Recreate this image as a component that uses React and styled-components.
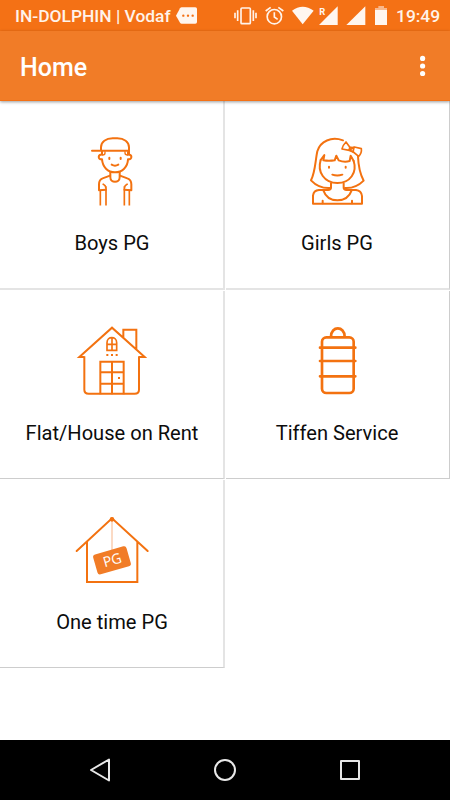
import React from 'react'
import styled, { createGlobalStyle } from 'styled-components'

const GlobalStyle = createGlobalStyle`
  * {
    box-sizing: border-box;
  }
  body {
    margin: 0;
    background: #fff;
    font-family: Roboto, sans-serif;
  }
`
const Screen = styled.div`
  display: flex;
  flex-direction: column;
  width: 450px;
  height: 800px;
  background: #fff;
  overflow: hidden;
`
const StatusBar = styled.div`
  display: flex;
  align-items: center;
  flex: none;
  height: 31px;
  padding: 0 10px 0 15px;
  background: #f47115;
  color: #fff3ea;
`
const Carrier = styled.span`
  width: 161px;
  font-size: 17.4px;
  font-weight: 500;
  line-height: 31px;
  padding-top: 1px;
  white-space: nowrap;
`
const StatusIcons = styled.div`
  display: flex;
  align-items: center;
  gap: 8px;
  margin-left: auto;
`
const Time = styled.span`
  width: 44px;
  margin-left: 1px;
  padding-top: 1px;
  font-size: 17.4px;
  font-weight: 500;
  line-height: 31px;
  white-space: nowrap;
`
const Icon = styled.svg`
  display: block;
  flex: none;
  width: ${(props) => props.$w}px;
  height: ${(props) => props.$h}px;
  margin-left: ${(props) => props.$shift || 0}px;
`
const AppBar = styled.header`
  display: flex;
  align-items: center;
  justify-content: space-between;
  flex: none;
  height: 70px;
  padding: 0 24px 0 20px;
  background: #f17c27;
  border-bottom: 1px solid #f47115;
  box-shadow: 0 1px 3px rgba(0, 0, 0, 0.4);
  z-index: 1;
`
const Title = styled.h1`
  margin: 0;
  padding-top: 5px;
  font-size: 25px;
  font-weight: 500;
  line-height: 30px;
  color: #fff;
`
const Grid = styled.main`
  display: grid;
  grid-template-columns: 225px 225px;
  grid-auto-rows: 189px;
  align-content: start;
  flex: 1;
`
const Cell = styled.div`
  display: flex;
  flex-direction: column;
  align-items: center;
  margin-top: 1px;
  padding: 23px 0 0 1px;
  border-right: 2px solid #e4e4e4;
  border-bottom: 1px solid #cdcdcd;

  &:nth-child(even) {
    margin-left: 1px;
    padding: 23px 1px 0 0;
    border-right: 1px solid #cdcdcd;
  }
  &:nth-child(-n + 2) {
    margin-top: 0;
    border-bottom: 2px solid #e4e4e4;
  }
`
const Label = styled.span`
  margin-top: 17px;
  font-size: 20.1px;
  line-height: 24px;
  color: #0c0c0c;
  white-space: nowrap;
`
const Drawing = styled.svg`
  display: block;
  flex: none;
  width: 90px;
  height: 90px;
  fill: none;
  stroke: #f37210;
  stroke-width: ${(props) => props.$line || 6};
  stroke-linecap: round;
  stroke-linejoin: round;
`
const NavBar = styled.nav`
  display: flex;
  align-items: center;
  justify-content: space-between;
  flex: none;
  height: 60px;
  padding: 0 88px;
  background: #000;
`

const BoyIcon = () => (
  <Drawing viewBox="-9 -3 270 270">
    <path d="M66 77H177M93 75V67C93 50 108 40 128 40H142C162 40 177 50 177 67V86" />
    <path d="M96 79V89C84 87 82 104 96 103C98 126 113 142 135 142C157 142 173 126 174 103C188 104 187 87 174 89V81" />
    <path d="M105 80V84Q105 90 98 90M165 80V84Q165 90 173 90" strokeWidth="4" />
    <path d="M118 98V102M152 98V102M125 119Q135 125 145 119" />
    <path d="M121 142V157C121 175 149 175 149 157V142" />
    <path d="M120 152L98 160Q87 164 87 178V196L108 194M150 152L172 160Q184 164 184 178V196L163 194" />
    <path d="M91 198V239M178 198V239M108 186V239M163 186V239M100 178Q107 181 108 190M171 178Q164 181 163 190" strokeLinecap="square" strokeWidth="5" />
  </Drawing>
)

const GirlIcon = () => (
  <Drawing viewBox="-9 -3 270 270">
    <path d="M144 46C109 34 76 48 67 79C61 106 61 142 48 166Q72 191 105 189M189 94C190 122 194 145 206 167Q182 191 150 189" />
    <path d="M77 105C66 141 88 174 127 174C166 174 187 142 176 108" />
    <path d="M77 105L88 90L85 106Q102 109 119 106L124 92L131 106Q148 113 164 108L167 92L176 108" />
    <path d="M153 51Q143 61 141 72L163 76L178 66L199 71Q201 84 191 94L175 81L163 75L164 66Z" strokeWidth="5" />
    <path d="M166 67L177 68L174 81L163 76Z" strokeWidth="5" />
    <path d="M102 125V128M152 125V128M112 149Q127 154 142 149" />
    <path d="M108 175V188Q108 194 99 195H72Q56 196 54 212V236H201V213Q199 197 183 195H155Q146 194 146 188V175" />
    <path d="M85 196Q95 225 127 226Q160 225 170 196M83 227V235M171 227V235" />
  </Drawing>
)

const HouseIcon = () => (
  <Drawing viewBox="6 -3 270 270">
    <g strokeLinecap="butt" strokeLinejoin="miter">
      <path d="M58 126H43L141 38L239 126H222M175 68V44H214V103" />
      <path d="M58 124V224Q58 236 71 236H209Q222 236 222 224V124" />
      <path d="M106 238V140H176V238M141 140V238M106 172H176M106 206H176" />
      <path d="M126 106V83C126 63 155 63 155 83V106ZM141 68V106M126 88H155" strokeWidth="5" />
      <path d="M124 120H130M138 120H144M152 120H158M159 189H165" />
    </g>
  </Drawing>
)

const TiffenIcon = () => (
  <Drawing viewBox="-9 -3 270 270" $line={8}>
    <rect x="81" y="67" width="95" height="167" rx="13" />
    <path d="M108 65C108 32 149 32 149 65" />
    <path d="M75 98H181M75 138H181M75 184H181" />
  </Drawing>
)

const OneTimeIcon = () => (
  <Drawing viewBox="6 -6 270 270">
    <rect x="139" y="46" width="4" height="90" fill="#fac8a8" stroke="none" />
    <path d="M35 138L141 40L248 138M66 111V231H217V111" strokeLinejoin="miter" />
    <circle cx="141" cy="43" r="4" fill="#f37210" />
    <g transform="rotate(-16 141 166)">
      <rect x="89" y="135" width="104" height="62" rx="8" fill="#f17c27" stroke="none" />
      <text
        x="142"
        y="180"
        fill="#fff"
        stroke="none"
        textAnchor="middle"
        fontFamily="Open Sans"
        fontSize="42"
      >
        PG
      </text>
    </g>
  </Drawing>
)

const items = [
  { name: 'Boys PG', Art: BoyIcon },
  { name: 'Girls PG', Art: GirlIcon },
  { name: 'Flat/House on Rent', Art: HouseIcon },
  { name: 'Tiffen Service', Art: TiffenIcon },
  { name: 'One time PG', Art: OneTimeIcon },
]

const Status = () => (
  <StatusBar>
    <Carrier>IN-DOLPHIN | Vodaf</Carrier>
    <Icon $w={21} $h={31} viewBox="528 0 63 93" fill="#fff6ef">
      <path d="M545 22H586Q591 22 591 27V66Q591 71 586 71H545Q542 71 540 68L528 47L540 25Q542 22 545 22Z" />
      <g fill="#f47115">
        <circle cx="550" cy="47" r="3.5" />
        <circle cx="564" cy="47" r="3.5" />
        <circle cx="578" cy="47" r="3.5" />
      </g>
    </Icon>
    <StatusIcons>
      <Icon $w={23} $h={31} viewBox="27 0 69 93" fill="none" stroke="#fff3ea" strokeWidth="5">
        <rect x="48" y="24" width="28" height="47" rx="3" />
        <path d="M38 31V63M85 31V63M30 38V55M93 38V55" />
      </Icon>
      <Icon $w={19} $h={31} viewBox="120 0 57 93" fill="none" stroke="#fff3ea" strokeWidth="5">
        <circle cx="148" cy="50" r="21.5" />
        <path d="M148 37V51L158 58M122 33L137 22M160 22L175 33" />
      </Icon>
      <Icon $w={22} $h={31} viewBox="200 0 66 93" fill="#fff6ef">
        <path d="M200 32Q232 9 265 32L232 73Z" />
      </Icon>
      <Icon $w={19} $h={31} $shift={-3} viewBox="280 0 57 93" fill="#fff6ef">
        <path d="M336 19V75H280Z" />
        <text x="281" y="46" fontFamily="Roboto" fontWeight="700" fontSize="28">R</text>
      </Icon>
      <Icon $w={20} $h={31} viewBox="362 0 60 93" fill="#fff6ef">
        <path d="M420 19V75H363Z" />
      </Icon>
      <Icon $w={12} $h={31} $shift={1} viewBox="450 0 36 93" fill="#fff6ef">
        <path d="M460 18H477V24H486V30H450V24H460Z" fill="#f9b78b" />
        <rect x="450" y="30" width="36" height="45" />
      </Icon>
      <Time>19:49</Time>
    </StatusIcons>
  </StatusBar>
)

function App() {
  return (
    <Screen>
      <GlobalStyle />
      <Status />
      <AppBar>
        <Title>Home</Title>
        <Icon $w={6} $h={22} viewBox="0 0 6 22" fill="#fff">
          <circle cx="2.6" cy="3.4" r="2.6" />
          <circle cx="2.6" cy="11" r="2.6" />
          <circle cx="2.6" cy="18.5" r="2.6" />
        </Icon>
      </AppBar>
      <Grid>
        {items.map(({ name, Art }) => (
          <Cell key={name}>
            <Art />
            <Label>{name}</Label>
          </Cell>
        ))}
      </Grid>
      <NavBar>
        <Icon $w={24} $h={24} viewBox="0 0 24 24" fill="none" stroke="#e8e8e8" strokeWidth="2" strokeLinejoin="round">
          <path d="M3 12L21 1.5V22.5Z" />
        </Icon>
        <Icon $w={24} $h={24} viewBox="0 0 24 24" fill="none" stroke="#e8e8e8" strokeWidth="2">
          <circle cx="12" cy="12" r="10" />
        </Icon>
        <Icon $w={24} $h={24} viewBox="0 0 24 24" fill="none" stroke="#e8e8e8" strokeWidth="2" strokeLinejoin="round">
          <rect x="3" y="3" width="18" height="18" />
        </Icon>
      </NavBar>
    </Screen>
  )
}

export default App
